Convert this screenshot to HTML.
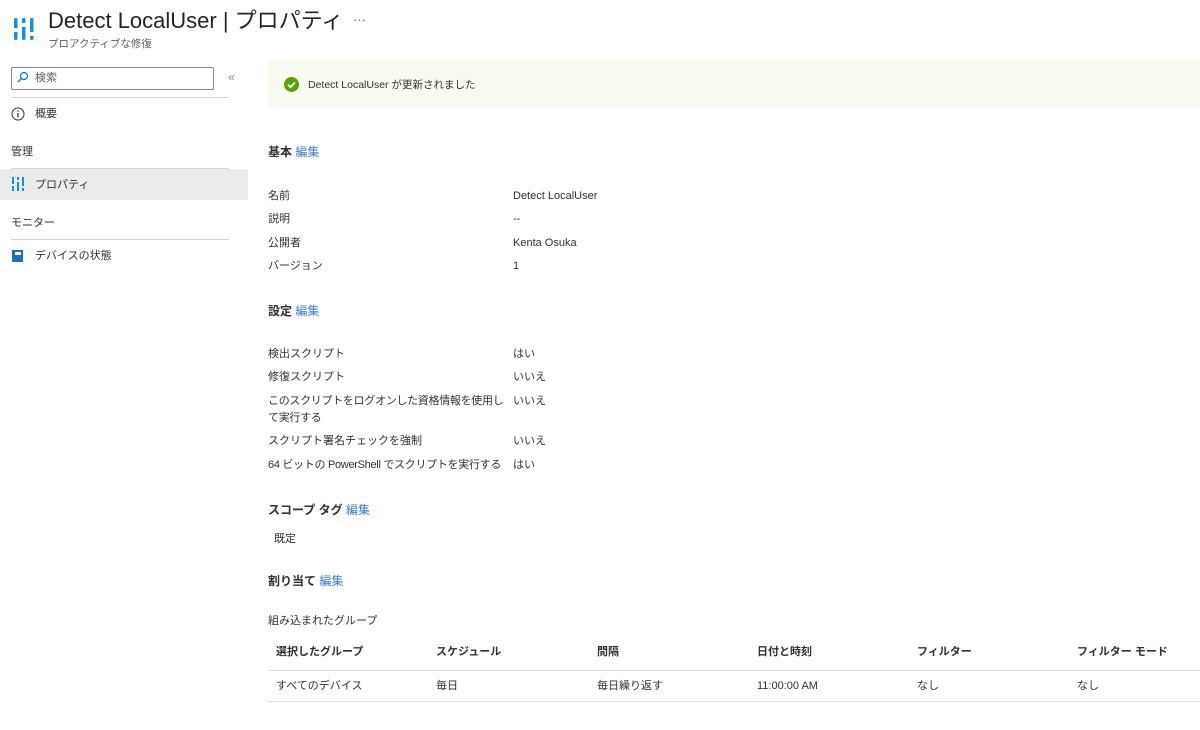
<!DOCTYPE html>
<html><head><meta charset="utf-8"><style>
body{margin:0;width:1200px;height:730px;background:#fff;font-family:"Liberation Sans","Noto Sans CJK JP",sans-serif;color:#323130;position:relative;overflow:hidden}
.a{position:absolute;white-space:nowrap;line-height:16px}
.s{font-size:11px}
.h{font-size:12px;font-weight:bold}
.l{color:#3d7fd0;font-weight:normal}
.line{position:absolute;height:1px;background:#d6d6d6}
.b{font-weight:bold}
</style></head><body>
<svg class="a" style="left:12px;top:14px" width="24" height="30" viewBox="0 0 24 30">
<rect x="2" y="4" width="3.5" height="22" rx="1.5" fill="#1890d8"/><rect x="2" y="14" width="3.5" height="4" fill="#fff"/>
<rect x="10" y="4" width="3.5" height="22" rx="1.5" fill="#1890d8"/><rect x="10" y="9" width="3.5" height="4" fill="#fff"/>
<rect x="18" y="4" width="3.5" height="22" rx="1.5" fill="#1890d8"/><rect x="18" y="18" width="3.5" height="4" fill="#fff"/>
</svg>
<div class="a" style="left:48px;top:8px;font-size:22px;line-height:26px;color:#252423">Detect LocalUser | プロパティ</div>
<div class="a" style="left:353px;top:12px;font-size:13px;color:#605e5c">···</div>
<div class="a" style="left:48px;top:36px;font-size:10.5px;color:#605e5c">プロアクティブな修復</div>
<div class="a" style="left:11px;top:67px;width:201px;height:21px;border:1px solid #8a8886;border-radius:2px"></div>
<svg class="a" style="left:17px;top:71px" width="12" height="12" viewBox="0 0 12 12"><circle cx="7" cy="5" r="3.5" fill="none" stroke="#0078d4" stroke-width="1.2"/><path d="M4.5 7.5L1 11" stroke="#0078d4" stroke-width="1.3"/></svg>
<div class="a s" style="left:35px;top:70px;color:#605e5c">検索</div>
<div class="a" style="left:228px;top:69px;font-size:12px;color:#8a8886">«</div>
<div class="line" style="left:11px;top:97px;width:218px"></div>
<svg class="a" style="left:11px;top:107px" width="14" height="14"><circle cx="7" cy="7" r="6" fill="none" stroke="#323130"/><rect x="6.4" y="6" width="1.2" height="4.5" fill="#323130"/><circle cx="7" cy="4" r=".8" fill="#323130"/></svg>
<div class="a s" style="left:35px;top:106px">概要</div>
<div class="a s" style="left:11px;top:144px">管理</div>
<div class="line" style="left:11px;top:168px;width:218px"></div>
<div class="a" style="left:0;top:169px;width:248px;height:31px;background:#ebebeb"></div>
<svg class="a" style="left:12px;top:177px" width="12" height="14"><rect x="0" y="0" width="2" height="14" fill="#1890d8"/><rect x="5" y="0" width="2" height="14" fill="#1890d8"/><rect x="10" y="0" width="2" height="14" fill="#1890d8"/><rect x="0" y="7" width="2" height="2" fill="#ebebeb"/><rect x="5" y="3" width="2" height="2" fill="#ebebeb"/><rect x="10" y="9" width="2" height="2" fill="#ebebeb"/></svg>
<div class="a s" style="left:35px;top:177px">プロパティ</div>
<div class="a s" style="left:11px;top:215px">モニター</div>
<div class="line" style="left:11px;top:239px;width:218px"></div>
<div class="a" style="left:12px;top:250px;width:11px;height:12px;background:#1f6fb5"></div>
<div class="a" style="left:15px;top:252px;width:6px;height:3px;background:#fff"></div>
<div class="a s" style="left:35px;top:248px">デバイスの状態</div>

<div class="a" style="left:268px;top:60px;width:932px;height:48px;background:#f8fcf0"></div>
<svg class="a" style="left:284px;top:77px" width="15" height="15"><circle cx="7.5" cy="7.5" r="7.5" fill="#57a300"/><path d="M4 7.8L6.5 10.2L11 5.3" fill="none" stroke="#fff" stroke-width="1.8"/></svg>
<div class="a" style="left:308px;top:77px;font-size:10.5px">Detect LocalUser が更新されました</div>

<div class="a h" style="left:268px;top:144px">基本 <span class="l">編集</span></div>
<div class="a s" style="left:268px;top:188px">名前</div><div class="a s" style="left:513px;top:188px">Detect LocalUser</div>
<div class="a s" style="left:268px;top:211px">説明</div><div class="a s" style="left:513px;top:211px">--</div>
<div class="a s" style="left:268px;top:235px">公開者</div><div class="a s" style="left:513px;top:235px">Kenta Osuka</div>
<div class="a s" style="left:268px;top:258px">バージョン</div><div class="a s" style="left:513px;top:258px">1</div>

<div class="a h" style="left:268px;top:303px">設定 <span class="l">編集</span></div>
<div class="a s" style="left:268px;top:346px">検出スクリプト</div><div class="a s" style="left:513px;top:346px">はい</div>
<div class="a s" style="left:268px;top:369px">修復スクリプト</div><div class="a s" style="left:513px;top:369px">いいえ</div>
<div class="a s" style="left:268px;top:393px;line-height:17px;letter-spacing:-0.3px">このスクリプトをログオンした資格情報を使用し<br>て実行する</div><div class="a s" style="left:513px;top:393px">いいえ</div>
<div class="a s" style="left:268px;top:433px">スクリプト署名チェックを強制</div><div class="a s" style="left:513px;top:433px">いいえ</div>
<div class="a s" style="left:268px;top:457px;letter-spacing:-0.3px">64 ビットの PowerShell でスクリプトを実行する</div><div class="a s" style="left:513px;top:457px">はい</div>

<div class="a h" style="left:268px;top:502px">スコープ タグ <span class="l">編集</span></div>
<div class="a s" style="left:274px;top:531px">既定</div>
<div class="a h" style="left:268px;top:573px">割り当て <span class="l">編集</span></div>
<div class="a s" style="left:268px;top:613px">組み込まれたグループ</div>

<div class="a s b" style="left:276px;top:644px">選択したグループ</div>
<div class="a s b" style="left:436px;top:644px">スケジュール</div>
<div class="a s b" style="left:597px;top:644px">間隔</div>
<div class="a s b" style="left:757px;top:644px">日付と時刻</div>
<div class="a s b" style="left:917px;top:644px">フィルター</div>
<div class="a s b" style="left:1077px;top:644px">フィルター モード</div>
<div class="line" style="left:268px;top:670px;width:932px;background:#e1dfdd"></div>
<div class="a s" style="left:276px;top:678px">すべてのデバイス</div>
<div class="a s" style="left:436px;top:678px">毎日</div>
<div class="a s" style="left:597px;top:678px">毎日繰り返す</div>
<div class="a s" style="left:757px;top:678px">11:00:00 AM</div>
<div class="a s" style="left:917px;top:678px">なし</div>
<div class="a s" style="left:1077px;top:678px">なし</div>
<div class="line" style="left:268px;top:701px;width:932px;background:#e1dfdd"></div>
</body></html>
